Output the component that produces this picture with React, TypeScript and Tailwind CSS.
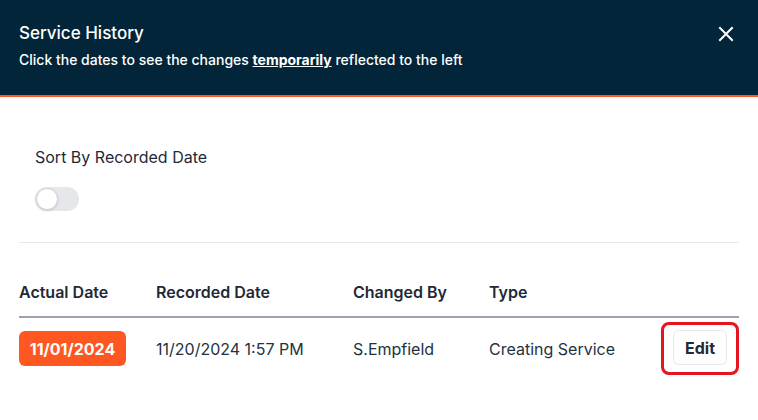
const rows = [
  {
    actual: "11/01/2024",
    recorded: "11/20/2024 1:57 PM",
    changedBy: "S.Empfield",
    type: "Creating Service",
  },
];

export default function App() {
  return (
    <div className="w-[758px] h-[420px] bg-white font-['Inter','Noto_Sans',sans-serif] overflow-hidden">
      <div className="h-[97px] bg-[#02253a] border-b-2 border-[#ff5722] px-[19px] pt-[21px] flex justify-between">
        <div>
          <p className="text-[17px] leading-6 font-medium text-white">Service History</p>
          <p className="mt-[5px] text-[14px] leading-5 font-medium text-white">
            Click the dates to see the changes <span className="font-bold underline">temporarily</span> reflected to the left
          </p>
        </div>
        <button className="w-6 h-6 mt-[1px] mr-[1px] flex items-center justify-center text-white">
          <svg width="16" height="16" viewBox="0 0 16 16" fill="none" stroke="currentColor" strokeWidth="2" strokeLinecap="square">
            <path d="M2 2L14 14M14 2L2 14" />
          </svg>
        </button>
      </div>

      <div className="px-[19px]">
        <div className="pt-[48px] px-4">
          <p className="text-[16px] leading-6 text-[#1f2937]">Sort By Recorded Date</p>
          <div className="mt-[18px] w-[44px] h-[24px] rounded-full bg-[#e5e7eb] p-[1px] flex items-center">
            <div className="w-[22px] h-[22px] rounded-full bg-white border border-[#d1d5db] shadow-sm" />
          </div>
        </div>

        <div className="mt-[31px] border-t border-[#e5e7eb]" />

        <div className="mt-[37px] grid grid-cols-[137px_197px_136px_1fr] pb-[12px] border-b-2 border-[#9ca3af] text-[16px] leading-6 font-semibold text-[#1f2937]">
          <span>Actual Date</span>
          <span>Recorded Date</span>
          <span>Changed By</span>
          <span>Type</span>
        </div>

        {rows.map((row, index) => (
          <div key={index} className="grid grid-cols-[137px_197px_136px_1fr] items-center pt-[4px] text-[16px] text-[#24323f]">
            <div>
              <button className="h-[35px] w-[107px] rounded-md bg-[#ff5722] text-white font-bold text-[16px]">
                {row.actual}
              </button>
            </div>
            <span>{row.recorded}</span>
            <span>{row.changedBy}</span>
            <div className="flex items-center justify-between">
              <span>{row.type}</span>
              <div className="border-[3px] border-[#e5141f] rounded-lg px-[9px] pt-[5px] pb-[7px]">
                <button className="h-[35px] w-[54px] rounded-md border border-[#e5e7eb] bg-white font-bold text-[16px] text-[#1f2937]">
                  Edit
                </button>
              </div>
            </div>
          </div>
        ))}
      </div>
    </div>
  );
}
